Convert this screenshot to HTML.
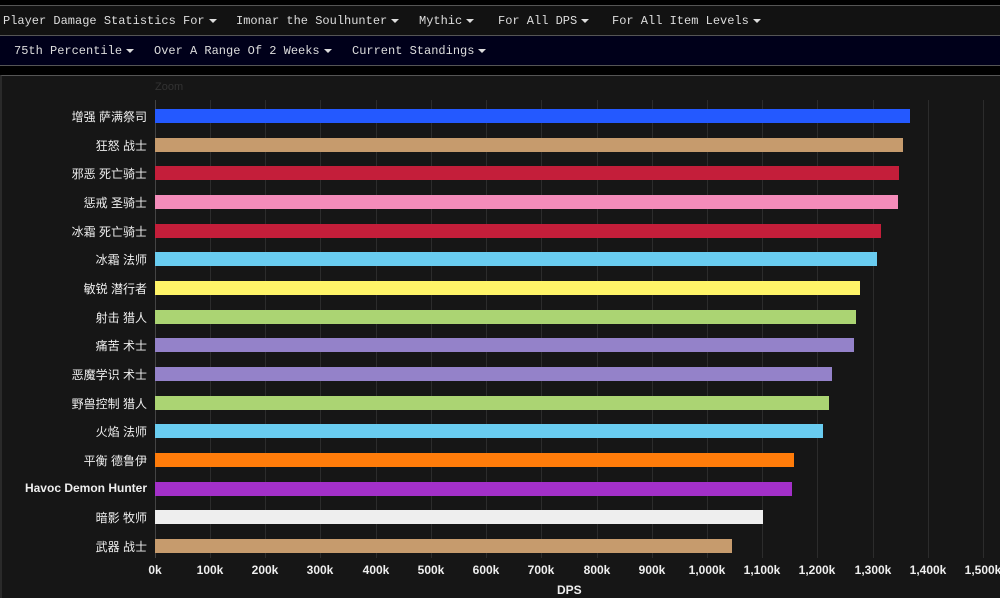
<!DOCTYPE html>
<html><head><meta charset="utf-8"><style>
*{margin:0;padding:0;box-sizing:border-box}
body{width:1000px;height:598px;background:#000;overflow:hidden;position:relative;font-family:"Liberation Sans","Noto Sans CJK SC",sans-serif}
.r1{position:absolute;left:0;top:5px;width:1000px;height:31px;background:#121212;border-top:1px solid #555;border-bottom:1px solid #555}
.r2{position:absolute;left:0;top:36px;width:1000px;height:30px;background:#00001a;border-bottom:1px solid #555}
.m{position:absolute;font-family:"Liberation Mono","Noto Sans CJK SC",monospace;font-size:12px;color:#ddd;white-space:nowrap}
.a{display:inline-block;width:0;height:0;border-left:4px solid transparent;border-right:4px solid transparent;border-top:4px solid #ddd;vertical-align:middle;margin-left:4px}
.chart{position:absolute;left:0;top:75px;width:1000px;height:523px;background:#161616;border-top:1px solid #555;border-left:2px solid #2a2a2a}
.g{position:absolute;top:100px;height:458px;width:1px;background:#2c2c2c}
.bar{position:absolute;left:155px;height:14px}
.lb{position:absolute;right:853px;font-size:12px;color:#eee;white-space:nowrap;text-align:right}
.x{position:absolute;top:563px;font-size:12px;color:#eee;font-weight:bold;transform:translateX(-50%)}
</style></head><body>
<div class="r1"></div><div class="r2"></div>
<div class="m" style="left:3px;top:14px">Player Damage Statistics For<span class="a"></span></div>
<div class="m" style="left:236px;top:14px">Imonar the Soulhunter<span class="a"></span></div>
<div class="m" style="left:419px;top:14px">Mythic<span class="a"></span></div>
<div class="m" style="left:498px;top:14px">For All DPS<span class="a"></span></div>
<div class="m" style="left:612px;top:14px">For All Item Levels<span class="a"></span></div>
<div class="m" style="left:14px;top:44px">75th Percentile<span class="a"></span></div>
<div class="m" style="left:154px;top:44px">Over A Range Of 2 Weeks<span class="a"></span></div>
<div class="m" style="left:352px;top:44px">Current Standings<span class="a"></span></div>
<div class="chart"></div>
<div style="position:absolute;left:155px;top:81px;font-size:11px;color:#333">Zoom</div>
<div class="g" style="left:155px;background:#444"></div>
<div class="g" style="left:210px"></div><div class="g" style="left:265px"></div><div class="g" style="left:320px"></div><div class="g" style="left:376px"></div><div class="g" style="left:431px"></div><div class="g" style="left:486px"></div><div class="g" style="left:541px"></div><div class="g" style="left:597px"></div><div class="g" style="left:652px"></div><div class="g" style="left:707px"></div><div class="g" style="left:762px"></div><div class="g" style="left:817px"></div><div class="g" style="left:873px"></div><div class="g" style="left:928px"></div><div class="g" style="left:983px"></div>

<div class="bar" style="top:109px;width:755px;background:#2459ff"></div><div class="lb" style="top:108px">增强 萨满祭司</div>
<div class="bar" style="top:138px;width:748px;background:#c69b6d"></div><div class="lb" style="top:137px">狂怒 战士</div>
<div class="bar" style="top:166px;width:744px;background:#c41e3a"></div><div class="lb" style="top:165px">邪恶 死亡骑士</div>
<div class="bar" style="top:195px;width:743px;background:#f48cba"></div><div class="lb" style="top:194px">惩戒 圣骑士</div>
<div class="bar" style="top:224px;width:726px;background:#c41e3a"></div><div class="lb" style="top:223px">冰霜 死亡骑士</div>
<div class="bar" style="top:252px;width:722px;background:#69ccf0"></div><div class="lb" style="top:251px">冰霜 法师</div>
<div class="bar" style="top:281px;width:705px;background:#fff468"></div><div class="lb" style="top:280px">敏锐 潜行者</div>
<div class="bar" style="top:310px;width:701px;background:#abd473"></div><div class="lb" style="top:309px">射击 猎人</div>
<div class="bar" style="top:338px;width:699px;background:#9482c9"></div><div class="lb" style="top:337px">痛苦 术士</div>
<div class="bar" style="top:367px;width:677px;background:#9482c9"></div><div class="lb" style="top:366px">恶魔学识 术士</div>
<div class="bar" style="top:396px;width:674px;background:#abd473"></div><div class="lb" style="top:395px">野兽控制 猎人</div>
<div class="bar" style="top:424px;width:668px;background:#69ccf0"></div><div class="lb" style="top:423px">火焰 法师</div>
<div class="bar" style="top:453px;width:639px;background:#ff7c0a"></div><div class="lb" style="top:452px">平衡 德鲁伊</div>
<div class="bar" style="top:482px;width:637px;background:#a330c9"></div><div class="lb" style="top:481px;font-weight:bold">Havoc Demon Hunter</div>
<div class="bar" style="top:510px;width:608px;background:#eeeeee"></div><div class="lb" style="top:509px">暗影 牧师</div>
<div class="bar" style="top:539px;width:577px;background:#c69b6d"></div><div class="lb" style="top:538px">武器 战士</div>

<div class="x" style="left:155px">0k</div><div class="x" style="left:210px">100k</div><div class="x" style="left:265px">200k</div><div class="x" style="left:320px">300k</div><div class="x" style="left:376px">400k</div><div class="x" style="left:431px">500k</div><div class="x" style="left:486px">600k</div><div class="x" style="left:541px">700k</div><div class="x" style="left:597px">800k</div><div class="x" style="left:652px">900k</div><div class="x" style="left:707px">1,000k</div><div class="x" style="left:762px">1,100k</div><div class="x" style="left:817px">1,200k</div><div class="x" style="left:873px">1,300k</div><div class="x" style="left:928px">1,400k</div><div class="x" style="left:983px">1,500k</div>
<div style="position:absolute;left:557px;top:583px;font-size:12px;color:#eee;font-weight:bold">DPS</div>
</body></html>
